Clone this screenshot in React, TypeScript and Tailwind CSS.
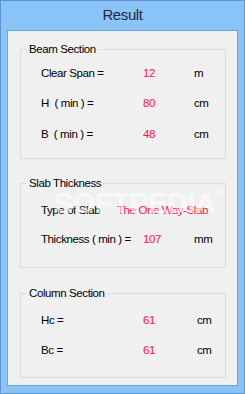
import type { ReactNode } from 'react'

const red = 'text-[#ff1744]'

/* group box like a WinForms GroupBox */
function Group({
  title,
  className,
  children,
}: {
  title: string
  className: string
  children: ReactNode
}) {
  return (
    <fieldset className={`w-[206px] border border-[#dcdcdc] ${className}`}>
      <legend className="ml-[6px] px-[2px] text-[11.5px] leading-[14px] tracking-[-0.4px] text-black">
        {title}
      </legend>
      {children}
    </fieldset>
  )
}

function Row({
  label,
  value,
  unit,
  labelW = 'w-[102px]',
  valueW = 'w-[51px]',
}: {
  label: string
  value: string
  unit?: string
  labelW?: string
  valueW?: string
}) {
  return (
    <div className="flex h-[14px] pl-[20px] text-[11.5px] leading-[14px] tracking-[-0.4px] whitespace-pre">
      <span className={`${labelW} text-black`}>{label}</span>
      <span className={`${valueW} ${red}`}>{value}</span>
      {unit && <span className="text-black">{unit}</span>}
    </div>
  )
}

export default function App() {
  return (
    <div className="w-[245px] h-[394px] border border-[#5a97cf] bg-[#8ac4f6] flex flex-col font-['Liberation_Sans',Arial,sans-serif]">
      <div className="h-[29px] flex items-center justify-center text-[15px] tracking-[-0.4px] text-[#1f2940]">
        Result
      </div>

      <div className="relative mx-[6px] flex-1 border border-[#6aa5db] bg-[#f0f0f0] pt-[11px] pl-[12px] flex flex-col">
        <Group title="Beam Section" className="h-[117px]">
          <div className="pt-[10px] flex flex-col">
            <Row label="Clear Span =" value="12" unit="m" />
            <div className="mt-[16px]">
              <Row label="H  ( min ) =" value="80" unit="cm" />
            </div>
            <div className="mt-[17px]">
              <Row label="B  ( min ) =" value="48" unit="cm" />
            </div>
          </div>
        </Group>

        <Group title="Slab Thickness" className="mt-[17px] h-[92px]">
          <div className="pt-[13px] flex flex-col gap-[15px]">
            <Row label="Type of Slab" value="The One Way-Slab" labelW="w-[76px]" valueW="w-auto" />
            <Row label="Thickness ( min ) =" value="107" unit="mm" />
          </div>
        </Group>

        <Group title="Column Section" className="mt-[18px] h-[92px]">
          <div className="pt-[13px] flex flex-col gap-[16px]">
            <Row label="Hc =" value="61" unit="cm" valueW="w-[54px]" />
            <Row label="Bc =" value="61" unit="cm" valueW="w-[54px]" />
          </div>
        </Group>

        {/* watermark */}
        <div className="pointer-events-none absolute left-[46px] top-[157px] flex items-start text-white/55">
          <span className="text-[29px] leading-[30px] font-bold tracking-[-0.5px]">SOFTPEDIA</span>
          <span className="ml-[2px] text-[9px] leading-[10px]">®</span>
        </div>
      </div>

      <div className="h-[7px]" />
    </div>
  )
}
